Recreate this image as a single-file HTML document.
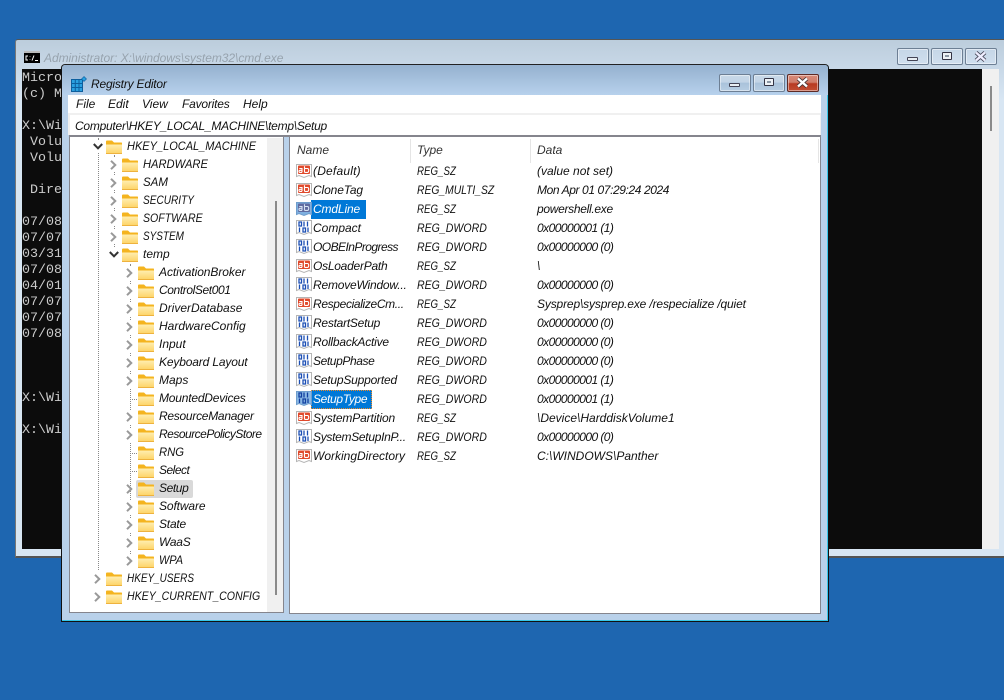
<!DOCTYPE html>
<html><head><meta charset="utf-8"><style>
html,body{margin:0;padding:0;width:1004px;height:700px;overflow:hidden;background:#1e66b0}
div,span,svg{position:absolute}
body{font:italic 12px "Liberation Sans",sans-serif;color:#111}
.t{white-space:nowrap;line-height:18px;height:18px;margin-top:1px}
.c{transform-origin:0 0}
.dw{transform:scaleX(.88)}
.sz{transform:scaleX(.81)}
.m{font:13.33px/16px "Liberation Mono",monospace;color:#ccc;white-space:pre;left:22px}
.btn{width:30px;height:16px;border:1px solid #6d7f94;border-radius:2px;background:linear-gradient(#c9d9e8 0,#c2d4e6 45%,#a9c2da 50%,#b7cde2 100%);box-shadow:inset 0 0 0 1px rgba(255,255,255,.45)}
.b2{height:15px;background:linear-gradient(#c5d6e7,#d0dfee)}
.gl{left:9px;top:8px;width:9px;height:2px;background:#e8eef3;border:1px solid #445;border-radius:1px}
.mx{left:10px;top:3px;width:8px;height:6px;border:1px solid #334;background:#8b97a5;box-shadow:inset 0 0 0 2px #eef2f6;border-radius:1px}
.ic{width:16px;height:16px}
.h{color:#333}
svg[style*="width:7px"]{background:#fff;box-shadow:0 0 0 2px #fff}
</style></head><body>
<svg style="width:0;height:0;left:0;top:0"><defs>
<linearGradient id="g" x1="0" y1="0" x2="0" y2="1"><stop offset="0" stop-color="#ffeeb0"/><stop offset="1" stop-color="#fdd263"/></linearGradient>
<symbol id="f" viewBox="0 0 16 14"><path d="M0 1.500Q0 .5 1 .5H6L8 2.500H15.500Q16 2.500 16 3.500V13Q16 14 15 14H1Q0 14 0 13Z" fill="#f4b41f"/><path d="M0 4.500H15.500Q16 4.500 16 5V13Q16 14 15 14H1Q0 14 0 13Z" fill="url(#g)"/><path d="M0 13.500H16" stroke="#eeb23e"/></symbol>
<symbol id="r" viewBox="0 0 7 10"><path d="M1 .8L5.300 5L1 9.200" fill="none" stroke="#999" stroke-width="2"/></symbol>
<symbol id="d" viewBox="0 0 10 7"><path d="M.8 1L5 5.300L9.200 1" fill="none" stroke="#333" stroke-width="2"/></symbol>
<symbol id="a" viewBox="0 0 16 16"><path d="M.5 1.500H15.500V13.500L13 12.500L8 14.500L3 12.500L.5 13.500Z" fill="#fff" stroke="#b5b5b5"/><rect x="2" y="2.500" width="12" height="8.500" rx="1" fill="#e0492b"/><path d="M3.300 5.500H6V9.400M6 7.300H4Q3 7.300 3 8.400T4 9.400H6M8.500 3.300V9.400M8.500 5.500H11.500Q12.700 5.500 12.700 7.400T11.500 9.400H8.500" fill="none" stroke="#fff" stroke-width="1.100"/></symbol>
<symbol id="as" viewBox="0 0 16 16"><path d="M.5 1.500H15.500V13.500L13 12.500L8 14.500L3 12.500L.5 13.500Z" fill="#7fb0e0" stroke="#6f9dcc"/><rect x="2" y="2.500" width="12" height="8.500" rx="1" fill="#5f6a9f"/><path d="M3.300 5.500H6V9.400M6 7.300H4Q3 7.300 3 8.400T4 9.400H6M8.500 3.300V9.400M8.500 5.500H11.500Q12.700 5.500 12.700 7.400T11.500 9.400H8.500" fill="none" stroke="#d5e2f2" stroke-width="1.100"/></symbol>
<symbol id="n" viewBox="0 0 16 16"><path d="M.5 .5H15.500V13.500L13 12.500L8 14.500L3 12.500L.5 13.500Z" fill="#fff" stroke="#b5b5b5"/><path d="M3 2H5.500V6H3ZM8 1.500V6.500M11.500 1.500V6.500M3.500 7.500V12M7 8H9.500V12H7ZM12 7.500V12" fill="none" stroke="#1c4fb4" stroke-width="1.300"/></symbol>
<symbol id="ns" viewBox="0 0 16 16"><path d="M.5 .5H15.500V13.500L13 12.500L8 14.500L3 12.500L.5 13.500Z" fill="#8ab8e4" stroke="#6f9dcc"/><path d="M3 2H5.500V6H3ZM8 1.500V6.500M11.500 1.500V6.500M3.500 7.500V12M7 8H9.500V12H7ZM12 7.500V12" fill="none" stroke="#123f9f" stroke-width="1.300"/></symbol>
</defs></svg>

<!-- CMD WINDOW -->
<div style="left:15px;top:39px;width:989px;height:519px;box-sizing:border-box;background:linear-gradient(#bccddc 0,#c9d9e8 30px,#d8e6f3 60px,#d8e6f3 100%);border-top:1px solid #555;border-left:1px solid #777;border-bottom:2px solid #555;border-radius:3px 0 0 0"></div>
<svg style="left:24px;top:51px;width:16px;height:12px" viewBox="0 0 16 12"><rect width="16" height="12" fill="#000"/><rect width="16" height="2" fill="#bbb"/><path d="M4 5H2V9H4M6 5.500V6M6 8V8.500M8 9.500L10 4.500M11 9.500H14" fill="none" stroke="#fff"/></svg>
<div class="t" style="left:44px;top:48px;color:#97a3ae;letter-spacing:-.05px">Administrator: X:\windows\system32\cmd.exe</div>
<div class="btn b2" style="left:897px;top:48px"><div class="gl"></div></div>
<div class="btn b2" style="left:931px;top:48px"><div class="mx"></div></div>
<div class="btn b2" style="left:965px;top:48px"><svg style="left:8px;top:2px;width:13px;height:11px" viewBox="0 0 13 11"><path d="M2 1.500L11 9.500M11 1.500L2 9.500" stroke="#445" stroke-width="4"/><path d="M2 1.500L11 9.500M11 1.500L2 9.500" stroke="#eef" stroke-width="2.400"/></svg></div>
<div style="left:22px;top:69px;width:960px;height:480px;background:#0c0c0c"></div>
<div style="left:982px;top:69px;width:17px;height:480px;background:#f0f0f0"></div>
<div style="left:990px;top:86px;width:2px;height:45px;background:#8a8a8a"></div>
<div class="m" style="top:71px">Microsoft
(c) Microsoft

X:\Windows
 Volume
 Volume

 Directory

07/08
07/07
03/31
07/08
04/01
07/07
07/07
07/08



X:\Windows

X:\Windows</div>

<!-- REGEDIT WINDOW -->
<div style="left:61px;top:64px;width:768px;height:558px;box-sizing:border-box;border:1px solid #111;border-top-color:#222;border-radius:4px 4px 0 0;background:#b9d1ea;box-shadow:inset -1px -1px 0 #38c6e8"></div>
<div style="left:62px;top:65px;width:766px;height:30px;background:linear-gradient(#95b1cf,#b7d1ec);border-radius:3px 3px 0 0"></div>
<svg style="left:71px;top:76px;width:16px;height:16px" viewBox="0 0 16 16"><path d="M.5 3.500H11.500V15.500H.5ZM4.300 3.500V15.500M8 3.500V15.500M.5 7.500H11.500M.5 11.500H11.500" fill="#2aa0e0" stroke="#0d5f9e" stroke-width="1"/><path d="M13 .5L15.500 3L13 5.500L10.500 3Z" fill="#2aa0e0" stroke="#0d5f9e" stroke-width=".6"/></svg>
<div class="t" style="left:91px;top:74px;color:#111;letter-spacing:-.2px">Registry Editor</div>
<div class="btn" style="left:719px;top:74px"><div class="gl"></div></div>
<div class="btn" style="left:753px;top:74px"><div class="mx"></div></div>
<div class="btn" style="left:787px;top:74px;border-color:#5d2a25;background:linear-gradient(#d98a78 0,#cf7e6c 45%,#b83a22 55%,#c24f34 100%)"><svg style="left:8px;top:2px;width:13px;height:11px" viewBox="0 0 13 11"><path d="M2 1.500L11 9.500M11 1.500L2 9.500" stroke="#433" stroke-width="4"/><path d="M2 1.500L11 9.500M11 1.500L2 9.500" stroke="#fff" stroke-width="2.400"/></svg></div>

<div style="left:68px;top:95px;width:753px;height:18px;background:#fff"></div>
<div class="t" style="left:76px;top:94px">File</div>
<div class="t" style="left:108px;top:94px">Edit</div>
<div class="t" style="left:142px;top:94px">View</div>
<div class="t" style="left:182px;top:94px;letter-spacing:-.2px">Favorites</div>
<div class="t" style="left:243px;top:94px">Help</div>
<div style="left:68px;top:113px;width:753px;height:22px;background:#f0f0f0"></div>
<div style="left:70px;top:115px;width:750px;height:20px;background:#fff"></div>
<div class="t" style="left:75px;top:116px;letter-spacing:-.25px">Computer\HKEY_LOCAL_MACHINE\temp\Setup</div>
<div style="left:69px;top:135px;width:752px;height:2px;background:#85858d"></div>

<!-- TREE -->
<div style="left:69px;top:137px;width:215px;height:476px;box-sizing:border-box;background:#fff;border:solid #85858d;border-width:0 1px 1px 1px"></div>
<div style="left:267px;top:138px;width:16px;height:474px;background:#f0f0f0"></div>
<div style="left:275px;top:201px;width:2px;height:394px;background:#8a8a8a"></div>
<div style="left:98px;top:138px;width:0;height:432px;border-left:1px dotted #888"></div>
<div style="left:114px;top:155px;width:0;height:96px;border-left:1px dotted #888"></div>
<div style="left:130px;top:264px;width:0;height:296px;border-left:1px dotted #888"></div>
<div style="left:130px;top:399px;width:7px;border-top:1px dotted #888"></div>
<div style="left:130px;top:453px;width:7px;border-top:1px dotted #888"></div>
<div style="left:130px;top:471px;width:7px;border-top:1px dotted #888"></div>
<div style="left:92px;top:140px;width:13px;height:12px;background:#fff"></div>
<div style="left:108px;top:248px;width:12px;height:12px;background:#fff"></div>
<div style="left:136px;top:480px;width:57px;height:18px;background:#d9d9d9;border-radius:2px"></div>

<svg style="left:93px;top:143px;width:10px;height:7px"><use href="#d"/></svg>
<svg style="left:106px;top:140px;width:16px;height:14px"><use href="#f"/></svg><div class="t c" style="left:127px;top:136px;transform:scaleX(.917)">HKEY_LOCAL_MACHINE</div>
<svg style="left:110px;top:160px;width:7px;height:10px"><use href="#r"/></svg><svg style="left:122px;top:158px;width:16px;height:14px"><use href="#f"/></svg><div class="t c" style="left:143px;top:154px;transform:scaleX(.93)">HARDWARE</div>
<svg style="left:110px;top:178px;width:7px;height:10px"><use href="#r"/></svg><svg style="left:122px;top:176px;width:16px;height:14px"><use href="#f"/></svg><div class="t c" style="left:143px;top:172px;transform:scaleX(.96)">SAM</div>
<svg style="left:110px;top:196px;width:7px;height:10px"><use href="#r"/></svg><svg style="left:122px;top:194px;width:16px;height:14px"><use href="#f"/></svg><div class="t c" style="left:143px;top:190px;transform:scaleX(.84)">SECURITY</div>
<svg style="left:110px;top:214px;width:7px;height:10px"><use href="#r"/></svg><svg style="left:122px;top:212px;width:16px;height:14px"><use href="#f"/></svg><div class="t c" style="left:143px;top:208px;transform:scaleX(.88)">SOFTWARE</div>
<svg style="left:110px;top:232px;width:7px;height:10px"><use href="#r"/></svg><svg style="left:122px;top:230px;width:16px;height:14px"><use href="#f"/></svg><div class="t c" style="left:143px;top:226px;transform:scaleX(.83)">SYSTEM</div>
<svg style="left:109px;top:251px;width:10px;height:7px"><use href="#d"/></svg><svg style="left:122px;top:248px;width:16px;height:14px"><use href="#f"/></svg><div class="t" style="left:143px;top:244px">temp</div>

<svg style="left:126px;top:268px;width:7px;height:10px"><use href="#r"/></svg><svg style="left:138px;top:266px;width:16px;height:14px"><use href="#f"/></svg><div class="t" style="left:159px;top:262px;letter-spacing:-.06px">ActivationBroker</div>
<svg style="left:126px;top:286px;width:7px;height:10px"><use href="#r"/></svg><svg style="left:138px;top:284px;width:16px;height:14px"><use href="#f"/></svg><div class="t" style="left:159px;top:280px;letter-spacing:-.4px">ControlSet001</div>
<svg style="left:126px;top:304px;width:7px;height:10px"><use href="#r"/></svg><svg style="left:138px;top:302px;width:16px;height:14px"><use href="#f"/></svg><div class="t" style="left:159px;top:298px">DriverDatabase</div>
<svg style="left:126px;top:322px;width:7px;height:10px"><use href="#r"/></svg><svg style="left:138px;top:320px;width:16px;height:14px"><use href="#f"/></svg><div class="t" style="left:159px;top:316px">HardwareConfig</div>
<svg style="left:126px;top:340px;width:7px;height:10px"><use href="#r"/></svg><svg style="left:138px;top:338px;width:16px;height:14px"><use href="#f"/></svg><div class="t" style="left:159px;top:334px">Input</div>
<svg style="left:126px;top:358px;width:7px;height:10px"><use href="#r"/></svg><svg style="left:138px;top:356px;width:16px;height:14px"><use href="#f"/></svg><div class="t" style="left:159px;top:352px;letter-spacing:-.15px">Keyboard Layout</div>
<svg style="left:126px;top:376px;width:7px;height:10px"><use href="#r"/></svg><svg style="left:138px;top:374px;width:16px;height:14px"><use href="#f"/></svg><div class="t" style="left:159px;top:370px">Maps</div>
<svg style="left:138px;top:392px;width:16px;height:14px"><use href="#f"/></svg><div class="t" style="left:159px;top:388px;letter-spacing:-.2px">MountedDevices</div>
<svg style="left:126px;top:412px;width:7px;height:10px"><use href="#r"/></svg><svg style="left:138px;top:410px;width:16px;height:14px"><use href="#f"/></svg><div class="t" style="left:159px;top:406px;letter-spacing:-.27px">ResourceManager</div>
<svg style="left:126px;top:430px;width:7px;height:10px"><use href="#r"/></svg><svg style="left:138px;top:428px;width:16px;height:14px"><use href="#f"/></svg><div class="t" style="left:159px;top:424px;letter-spacing:-.5px">ResourcePolicyStore</div>
<svg style="left:138px;top:446px;width:16px;height:14px"><use href="#f"/></svg><div class="t c" style="left:159px;top:442px;transform:scaleX(.94)">RNG</div>
<svg style="left:138px;top:464px;width:16px;height:14px"><use href="#f"/></svg><div class="t" style="left:159px;top:460px;letter-spacing:-.5px">Select</div>
<svg style="left:126px;top:484px;width:7px;height:10px;background:transparent;box-shadow:none"><use href="#r"/></svg><svg style="left:138px;top:482px;width:16px;height:14px"><use href="#f"/></svg><div class="t" style="left:159px;top:478px;letter-spacing:-.4px">Setup</div>
<svg style="left:126px;top:502px;width:7px;height:10px"><use href="#r"/></svg><svg style="left:138px;top:500px;width:16px;height:14px"><use href="#f"/></svg><div class="t" style="left:159px;top:496px;letter-spacing:-.12px">Software</div>
<svg style="left:126px;top:520px;width:7px;height:10px"><use href="#r"/></svg><svg style="left:138px;top:518px;width:16px;height:14px"><use href="#f"/></svg><div class="t" style="left:159px;top:514px;letter-spacing:-.2px">State</div>
<svg style="left:126px;top:538px;width:7px;height:10px"><use href="#r"/></svg><svg style="left:138px;top:536px;width:16px;height:14px"><use href="#f"/></svg><div class="t" style="left:159px;top:532px;letter-spacing:-.25px">WaaS</div>
<svg style="left:126px;top:556px;width:7px;height:10px"><use href="#r"/></svg><svg style="left:138px;top:554px;width:16px;height:14px"><use href="#f"/></svg><div class="t c" style="left:159px;top:550px;transform:scaleX(.91)">WPA</div>
<svg style="left:94px;top:574px;width:7px;height:10px"><use href="#r"/></svg><svg style="left:106px;top:572px;width:16px;height:14px"><use href="#f"/></svg><div class="t c" style="left:127px;top:568px;transform:scaleX(.83)">HKEY_USERS</div>
<svg style="left:94px;top:592px;width:7px;height:10px"><use href="#r"/></svg><svg style="left:106px;top:590px;width:16px;height:14px"><use href="#f"/></svg><div class="t c" style="left:127px;top:586px;transform:scaleX(.88)">HKEY_CURRENT_CONFIG</div>

<!-- LIST -->
<div style="left:289px;top:137px;width:532px;height:477px;box-sizing:border-box;background:#fff;border:solid #85858d;border-width:0 1px 1px 1px"></div>
<div style="left:410px;top:139px;width:1px;height:24px;background:#e5e5e5"></div>
<div style="left:530px;top:139px;width:1px;height:24px;background:#e5e5e5"></div>
<div style="left:818px;top:139px;width:1px;height:24px;background:#e5e5e5"></div>
<div class="t h" style="left:297px;top:140px">Name</div>
<div class="t h" style="left:417px;top:140px">Type</div>
<div class="t h" style="left:537px;top:140px">Data</div>

<div style="left:311px;top:200px;width:55px;height:19px;background:#0078d7"></div>
<div style="left:311px;top:390px;width:61px;height:19px;box-sizing:border-box;background:#0078d7;border:1px dotted #f08a24"></div>

<svg class="ic" style="left:296px;top:163px"><use href="#a"/></svg><div class="t" style="left:313px;top:161px;letter-spacing:.2px">(Default)</div><div class="t c sz" style="left:417px;top:161px">REG_SZ</div><div class="t" style="left:537px;top:161px">(value not set)</div>
<svg class="ic" style="left:296px;top:182px"><use href="#a"/></svg><div class="t" style="left:313px;top:180px;letter-spacing:-.12px">CloneTag</div><div class="t c" style="left:417px;top:180px;transform:scaleX(.86)">REG_MULTI_SZ</div><div class="t" style="left:537px;top:180px;letter-spacing:-.4px">Mon Apr 01 07:29:24 2024</div>
<svg class="ic" style="left:296px;top:201px"><use href="#as"/></svg><div class="t" style="left:313px;top:199px;color:#fff;letter-spacing:-.14px">CmdLine</div><div class="t c sz" style="left:417px;top:199px">REG_SZ</div><div class="t" style="left:537px;top:199px;letter-spacing:-.3px">powershell.exe</div>
<svg class="ic" style="left:296px;top:220px"><use href="#n"/></svg><div class="t" style="left:313px;top:218px">Compact</div><div class="t c dw" style="left:417px;top:218px">REG_DWORD</div><div class="t" style="left:537px;top:218px;letter-spacing:-.55px">0x00000001 (1)</div>
<svg class="ic" style="left:296px;top:239px"><use href="#n"/></svg><div class="t" style="left:313px;top:237px;letter-spacing:-.55px">OOBEInProgress</div><div class="t c dw" style="left:417px;top:237px">REG_DWORD</div><div class="t" style="left:537px;top:237px;letter-spacing:-.55px">0x00000000 (0)</div>
<svg class="ic" style="left:296px;top:258px"><use href="#a"/></svg><div class="t" style="left:313px;top:256px;letter-spacing:-.25px">OsLoaderPath</div><div class="t c sz" style="left:417px;top:256px">REG_SZ</div><div class="t" style="left:537px;top:256px">\</div>
<svg class="ic" style="left:296px;top:277px"><use href="#n"/></svg><div class="t" style="left:313px;top:275px;letter-spacing:-.2px">RemoveWindow...</div><div class="t c dw" style="left:417px;top:275px">REG_DWORD</div><div class="t" style="left:537px;top:275px;letter-spacing:-.55px">0x00000000 (0)</div>
<svg class="ic" style="left:296px;top:296px"><use href="#a"/></svg><div class="t" style="left:313px;top:294px;letter-spacing:-.35px">RespecializeCm...</div><div class="t c sz" style="left:417px;top:294px">REG_SZ</div><div class="t" style="left:537px;top:294px;letter-spacing:-.15px">Sysprep\sysprep.exe /respecialize /quiet</div>
<svg class="ic" style="left:296px;top:315px"><use href="#n"/></svg><div class="t" style="left:313px;top:313px;letter-spacing:-.25px">RestartSetup</div><div class="t c dw" style="left:417px;top:313px">REG_DWORD</div><div class="t" style="left:537px;top:313px;letter-spacing:-.55px">0x00000000 (0)</div>
<svg class="ic" style="left:296px;top:334px"><use href="#n"/></svg><div class="t" style="left:313px;top:332px;letter-spacing:-.2px">RollbackActive</div><div class="t c dw" style="left:417px;top:332px">REG_DWORD</div><div class="t" style="left:537px;top:332px;letter-spacing:-.55px">0x00000000 (0)</div>
<svg class="ic" style="left:296px;top:353px"><use href="#n"/></svg><div class="t" style="left:313px;top:351px;letter-spacing:-.4px">SetupPhase</div><div class="t c dw" style="left:417px;top:351px">REG_DWORD</div><div class="t" style="left:537px;top:351px;letter-spacing:-.55px">0x00000000 (0)</div>
<svg class="ic" style="left:296px;top:372px"><use href="#n"/></svg><div class="t" style="left:313px;top:370px;letter-spacing:-.2px">SetupSupported</div><div class="t c dw" style="left:417px;top:370px">REG_DWORD</div><div class="t" style="left:537px;top:370px;letter-spacing:-.55px">0x00000001 (1)</div>
<svg class="ic" style="left:296px;top:391px"><use href="#ns"/></svg><div class="t" style="left:313px;top:389px;color:#fff;letter-spacing:-.33px">SetupType</div><div class="t c dw" style="left:417px;top:389px">REG_DWORD</div><div class="t" style="left:537px;top:389px;letter-spacing:-.55px">0x00000001 (1)</div>
<svg class="ic" style="left:296px;top:410px"><use href="#a"/></svg><div class="t" style="left:313px;top:408px;letter-spacing:-.13px">SystemPartition</div><div class="t c sz" style="left:417px;top:408px">REG_SZ</div><div class="t" style="left:537px;top:408px">\Device\HarddiskVolume1</div>
<svg class="ic" style="left:296px;top:429px"><use href="#n"/></svg><div class="t" style="left:313px;top:427px;letter-spacing:-.3px">SystemSetupInP...</div><div class="t c dw" style="left:417px;top:427px">REG_DWORD</div><div class="t" style="left:537px;top:427px;letter-spacing:-.55px">0x00000000 (0)</div>
<svg class="ic" style="left:296px;top:448px"><use href="#a"/></svg><div class="t" style="left:313px;top:446px">WorkingDirectory</div><div class="t c sz" style="left:417px;top:446px">REG_SZ</div><div class="t" style="left:537px;top:446px">C:\WINDOWS\Panther</div>
</body></html>
